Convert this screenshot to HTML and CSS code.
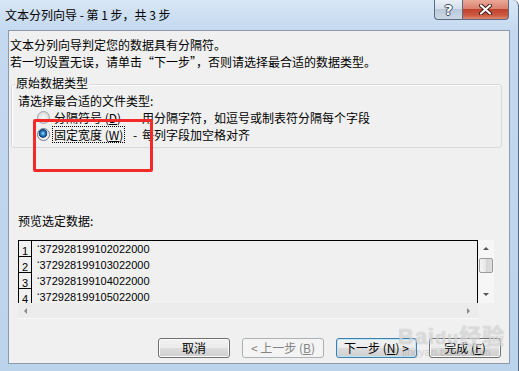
FILE: index.html
```html
<!DOCTYPE html>
<html lang="zh-CN">
<head>
  <meta charset="UTF-8" />
  <title>文本分列向导</title>
  <link rel="stylesheet" href="styles.css">
</head>
<body>
  <div class="window">
    <div class="titlebar">
      <span class="title">文本分列向导 - 第 1 步，共 3 步</span>
      <div class="caps">
        <div class="cap help">?</div>
        <div class="cap close">
          <svg width="13" height="11" viewBox="0 0 13 11">
            <path d="M2 1.5 L11 9.5 M11 1.5 L2 9.5" stroke="#3b1610" stroke-width="4" stroke-linecap="round"/>
            <path d="M2 1.5 L11 9.5 M11 1.5 L2 9.5" stroke="#ffffff" stroke-width="2.2" stroke-linecap="round"/>
          </svg>
        </div>
      </div>
    </div>

    <div class="client">
      <p class="intro">文本分列向导判定您的数据具有分隔符。</p>
      <p class="intro">若一切设置无误，请单击“下一步”，否则请选择最合适的数据类型。</p>

      <div class="group">
        <div class="group-title">原始数据类型</div>
        <div class="prompt">请选择最合适的文件类型:</div>
        <div class="option">
          <span class="radio"></span>
          <span class="opt-label"><span class="focus">分隔符号 (<u>D</u>)</span></span>
          <span class="desc"><span class="dash">-</span>用分隔字符，如逗号或制表符分隔每个字段</span>
        </div>
        <div class="option">
          <span class="radio checked"></span>
          <span class="opt-label"><span class="focus on">固定宽度 (<u>W</u>)</span></span>
          <span class="desc"><span class="dash">-</span>每列字段加空格对齐</span>
        </div>
      </div>

      <div class="preview-label">预览选定数据:</div>
      <div class="preview">
        <div class="data">
          <div class="row"><span class="num">1</span><span class="cell">‘372928199102022000</span></div>
          <div class="row"><span class="num">2</span><span class="cell">‘372928199103022000</span></div>
          <div class="row"><span class="num">3</span><span class="cell">‘372928199104022000</span></div>
          <div class="row"><span class="num">4</span><span class="cell">‘372928199105022000</span></div>
        </div>
        <div class="vscroll">
          <div class="vbtn"><span class="arrow up"></span></div>
          <div class="thumb"></div>
          <div class="vspace"></div>
          <div class="vbtn"><span class="arrow down"></span></div>
        </div>
        <div class="hscroll">
          <span class="arrow left"></span>
          <span class="arrow right"></span>
        </div>
        <div class="corner"></div>
      </div>

      <div class="buttons">
        <button class="btn w72">取消</button>
        <button class="btn w82 disabled">&lt; 上一步 (<u>B</u>)</button>
        <button class="btn w81 default">下一步 (<u>N</u>) &gt;</button>
        <button class="btn w72">完成 (<u>F</u>)</button>
      </div>
    </div>

    <div class="highlight"></div>
    <div class="watermark">
      <span class="wm-logo">Bai<span class="paw">du</span>经验</span>
      <span class="wm-url">jingyan.baidu.com</span>
    </div>
  </div>
</body>
</html>
```

FILE: styles.css
```css
body {
  margin: 0;
  background: #ffffff;
  font-family: "Noto Sans CJK SC", "Liberation Sans", sans-serif;
  font-size: 12px;
  color: #000;
}

.window {
  position: relative;
  box-sizing: border-box;
  width: 519px;
  height: 371px;
  background: linear-gradient(#d8e6f5 0, #c4d9f0 30px, #bcd3ec 100%);
  border-right: 1px solid #56687d;
  border-top-right-radius: 6px;
}

/* title bar */
.titlebar {
  height: 30px;
  display: flex;
  justify-content: space-between;
  align-items: flex-start;
  padding-right: 9px;
}
.title {
  line-height: 30px;
  padding-left: 5px;
}
.caps {
  display: flex;
}
.cap {
  height: 20px;
  box-sizing: border-box;
  border: 1px solid #5b6c81;
  border-top: none;
  display: flex;
  align-items: center;
  justify-content: center;
}
.help {
  width: 28px;
  border-right: none;
  border-bottom-left-radius: 4px;
  background: linear-gradient(#e8eff7, #d4dfeb 45%, #bac9da 50%, #cbd8e6);
  color: #fff;
  font: bold 14px "DejaVu Sans", sans-serif;
  text-shadow: 1px 0 #3a4a5e, -1px 0 #3a4a5e, 0 1px #3a4a5e, 0 -1px #3a4a5e;
}
.close {
  width: 47px;
  border-bottom-right-radius: 4px;
  background: linear-gradient(#eaa999, #d9826f 45%, #c0432d 50%, #cc5840 80%, #df8a72);
}

/* client area */
.client {
  margin-left: 8px;
  width: 502px;
  height: 334px;
  box-sizing: border-box;
  border: 1px solid #8d9aab;
  background: #f0f0f0;
  padding: 5px 0 0 1px;
}
.intro {
  margin: 0;
  line-height: 17px;
}

.group {
  margin: 14px 0 0 1px;
  width: 491px;
  box-sizing: border-box;
  border: 1px solid #d5d9dd;
  border-radius: 3px;
  box-shadow: inset 1px 1px #fff;
  padding: 0 0 4px 6px;
}
.group-title {
  width: max-content;
  margin: -9px 0 0 -3px;
  padding: 0 1px;
  background: #f0f0f0;
  line-height: 14px;
}
.prompt {
  margin-top: 3px;
  line-height: 16px;
}
.option {
  display: flex;
  align-items: center;
  height: 17px;
  padding-left: 19px;
}
.radio {
  width: 13px;
  height: 13px;
  box-sizing: border-box;
  border-radius: 50%;
  border: 1px solid #a3a6a9;
  background: radial-gradient(circle at 50% 50%, #f6f6f6 0, #e4e4e4 4px, #d7d7d7 5px, #f2f2f2 6px);
  margin-right: 2px;
}
.radio.checked {
  border-color: #6e7a86;
  background: radial-gradient(circle at 45% 40%, #b9e4ff 0, #3e94d8 1.6px, #135491 3.4px, #0c3e70 4px, #e0e0e0 4.6px, #f4f4f4 6px);
}
.opt-label {
  width: 81px;
}
.focus {
  display: inline-block;
  border: 1px dotted transparent;
  padding: 0 1px;
  line-height: 15px;
}
.focus.on {
  border-color: #000;
}
.dash {
  display: inline-block;
  width: 9px;
}

/* preview */
.preview-label {
  margin: 65px 0 0 8px;
  line-height: 16px;
}
.preview {
  margin: 11px 0 0 8px;
  width: 476px;
  display: grid;
  grid-template-columns: 460px 16px;
  grid-template-rows: 63px 16px;
}
.data {
  box-sizing: border-box;
  border: 1px solid #000;
  border-bottom: none;
  overflow: hidden;
}
.row {
  display: flex;
  height: 16px;
  font-family: "Liberation Sans", Arial, sans-serif;
  font-size: 11px;
}
.num {
  width: 13px;
  box-sizing: border-box;
  border-right: 1px solid #000;
  border-bottom: 1px solid #000;
  padding: 5px 0 0 3px;
  line-height: 11px;
}
.cell {
  padding: 1px 0 0 5px;
  line-height: 15px;
}

.vscroll {
  background: #f6f6f6;
  display: flex;
  flex-direction: column;
  align-items: center;
}
.vbtn {
  height: 17px;
  display: flex;
  align-items: center;
  justify-content: center;
}
.vspace {
  flex: 1;
}
.thumb {
  width: 14px;
  height: 15px;
  margin-top: 1px;
  box-sizing: border-box;
  border: 1px solid #9b9b9b;
  border-radius: 2px;
  background: linear-gradient(to right, #f5f5f5, #e6e6e6 50%, #d5d5d5 50%, #dedede);
}
.arrow {
  width: 0;
  height: 0;
  border: solid transparent;
}
.arrow.up {
  border-width: 0 3px 3px;
  border-bottom-color: #555;
}
.arrow.down {
  border-width: 3px 3px 0;
  border-top-color: #555;
}
.arrow.left {
  border-width: 3px 3px 3px 0;
  border-right-color: #8a8a8a;
}
.arrow.right {
  border-width: 3px 0 3px 3px;
  border-left-color: #8a8a8a;
}
.hscroll {
  background: #ececec;
  border-bottom: 1px solid #f9f9f9;
  box-sizing: border-box;
  display: flex;
  justify-content: space-between;
  align-items: center;
  padding: 0 8px 0 6px;
}
.corner {
  background: #f0f0f0;
}

/* buttons */
.buttons {
  display: flex;
  justify-content: flex-end;
  gap: 12px;
  margin-top: 19px;
  padding-right: 8px;
}
.btn {
  height: 20px;
  box-sizing: border-box;
  border: 1px solid #707070;
  border-radius: 3px;
  background: linear-gradient(#f2f2f2 0, #ebebeb 50%, #dddddd 50%, #cfcfcf 100%);
  box-shadow: inset 0 0 0 1px #fbfbfb;
  font: 12px "Noto Sans CJK SC", "Liberation Sans", sans-serif;
  line-height: 18px;
  padding: 0;
  color: #000;
  text-align: center;
}
.w72 { width: 72px; }
.w81 { width: 81px; }
.w82 { width: 82px; }
.btn.default {
  border-color: #3c7fb1;
  box-shadow: inset 0 0 0 1px #bfe6fb;
}
.btn.disabled {
  border-color: #adb2b5;
  background: #f4f4f4;
  box-shadow: none;
  color: #838383;
}

/* overlays */
.highlight {
  position: absolute;
  left: 33px;
  top: 119px;
  width: 120px;
  height: 53px;
  box-sizing: border-box;
  border: 3px solid #f42a2a;
  border-radius: 2px;
}
.watermark {
  position: absolute;
  left: 398px;
  top: 318px;
  display: flex;
  flex-direction: column;
  pointer-events: none;
}
.wm-logo {
  font: bold 22px "Liberation Sans", "Noto Sans CJK SC", sans-serif;
  color: rgba(255, 255, 255, 0.55);
  text-shadow: 0 0 1px rgba(90, 90, 90, 0.45);
  letter-spacing: 1px;
}
.paw {
  font-size: 18px;
}
.wm-url {
  font: 11px "Liberation Sans", sans-serif;
  color: rgba(140, 140, 140, 0.35);
  margin: -4px 0 0 4px;
}
```
